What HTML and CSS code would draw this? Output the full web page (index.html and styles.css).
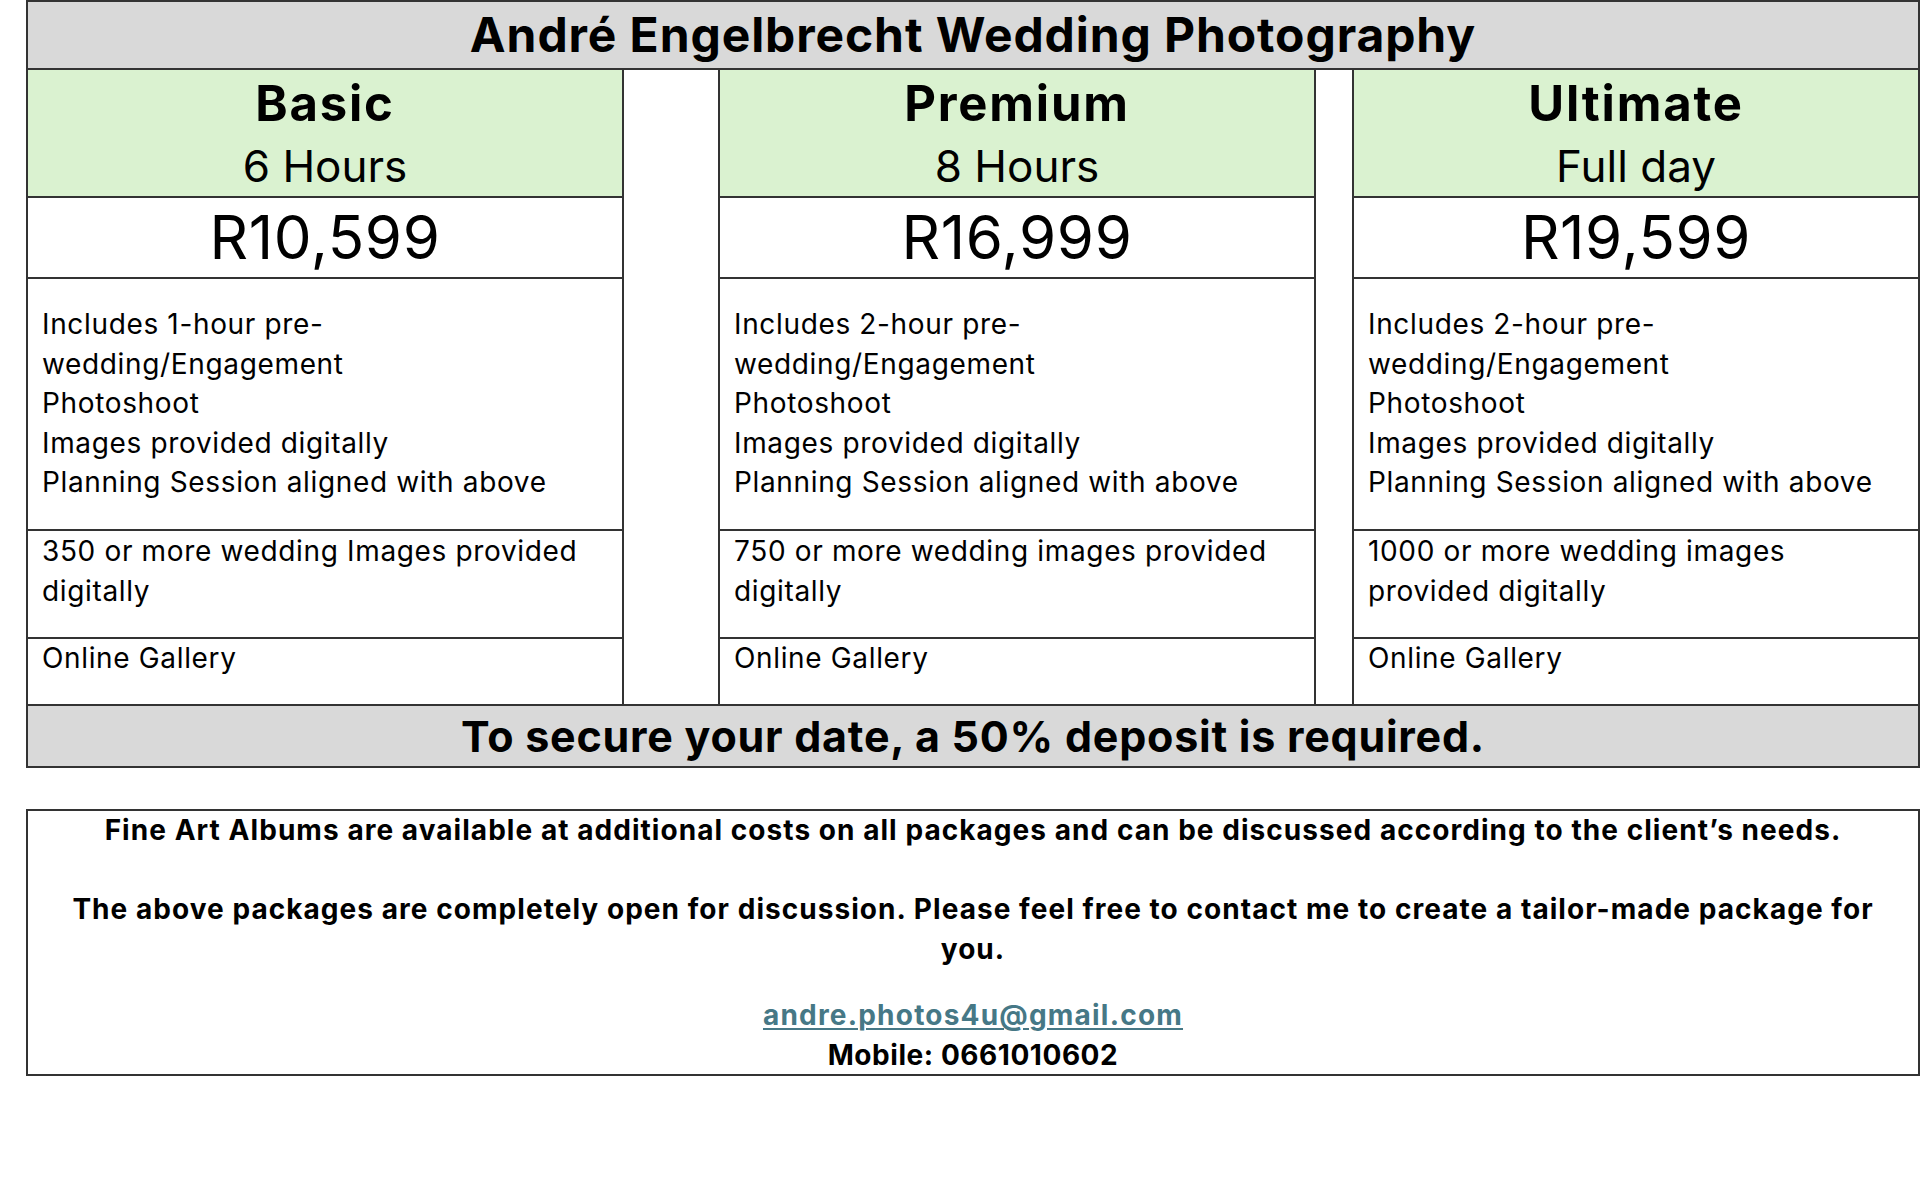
FILE: index.html
```html
<!DOCTYPE html>
<html lang="en">
<head>
<meta charset="utf-8">
<title>André Engelbrecht Wedding Photography</title>
<link rel="stylesheet" href="styles.css">
</head>
<body>
<div class="page">
  <table class="pricing">
    <colgroup>
      <col class="c-pkg"><col class="c-gap1"><col class="c-pkg"><col class="c-gap2"><col class="c-last">
    </colgroup>
    <tr class="r-title"><th colspan="5" class="title">André Engelbrecht Wedding Photography</th></tr>
    <tr class="r-head">
      <td class="head"><div class="name">Basic</div><div class="dur">6 Hours</div></td>
      <td class="gap" rowspan="5"></td>
      <td class="head"><div class="name">Premium</div><div class="dur">8 Hours</div></td>
      <td class="gap" rowspan="5"></td>
      <td class="head"><div class="name">Ultimate</div><div class="dur">Full day</div></td>
    </tr>
    <tr class="r-price">
      <td class="price">R10,599</td>
      <td class="price">R16,999</td>
      <td class="price">R19,599</td>
    </tr>
    <tr class="r-feat">
      <td class="feat">Includes 1-hour pre-<br>wedding/Engagement<br>Photoshoot<br>Images provided digitally<br>Planning Session aligned with above</td>
      <td class="feat">Includes 2-hour pre-<br>wedding/Engagement<br>Photoshoot<br>Images provided digitally<br>Planning Session aligned with above</td>
      <td class="feat">Includes 2-hour pre-<br>wedding/Engagement<br>Photoshoot<br>Images provided digitally<br>Planning Session aligned with above</td>
    </tr>
    <tr class="r-img">
      <td class="imgs">350 or more wedding Images provided<br>digitally</td>
      <td class="imgs">750 or more wedding images provided<br>digitally</td>
      <td class="imgs">1000 or more wedding images<br>provided digitally</td>
    </tr>
    <tr class="r-gal">
      <td class="gal">Online Gallery</td>
      <td class="gal">Online Gallery</td>
      <td class="gal">Online Gallery</td>
    </tr>
    <tr class="r-dep"><td colspan="5" class="deposit">To secure your date, a 50% deposit is required.</td></tr>
  </table>

  <div class="notes">
    <p class="note">Fine Art Albums are available at additional costs on all packages and can be discussed according to the client’s needs.</p>
    <p class="note gap-line">The above packages are completely open for discussion. Please feel free to contact me to create a tailor-made package for<br>you.</p>
    <p class="contact email"><a href="mailto:andre.photos4u@gmail.com">andre.photos4u@gmail.com</a></p>
    <p class="contact mobile">Mobile: 0661010602</p>
  </div>
</div>
</body>
</html>
```

FILE: styles.css
```css
* { box-sizing: border-box; }

body {
  margin: 0;
  background: #ffffff;
  color: #000000;
  font-family: Inter, "Open Sans", "Liberation Sans", sans-serif;
}

.page {
  padding: 0 0 0 26px;
}

.pricing {
  border-collapse: collapse;
  table-layout: fixed;
  width: 1894px;
}

.c-pkg { width: 596px; }
.c-gap1 { width: 96px; }
.c-gap2 { width: 38px; }

.pricing td,
.pricing th {
  border: 2px solid #333333;
  padding: 0;
  vertical-align: top;
}

.r-title { height: 68px; }
.r-head { height: 128px; }
.r-price { height: 81px; }
.r-feat { height: 252px; }
.r-img { height: 108px; }
.r-gal { height: 67px; }
.r-dep { height: 61px; }

.title {
  background: #d9d9d9;
  font-size: 48px;
  font-weight: 700;
  letter-spacing: 0.9px;
  line-height: 66px;
  text-align: center;
  vertical-align: middle;
}

.head {
  background: #daf2d0;
  text-align: center;
  padding-top: 6px !important;
}

.name {
  font-size: 49px;
  font-weight: 700;
  letter-spacing: 1.8px;
  line-height: 56px;
}

.dur {
  font-size: 44px;
  font-weight: 400;
  line-height: 56px;
  margin-top: 6px;
}

.gap {
  background: #ffffff;
}

.price {
  font-size: 60px;
  font-weight: 400;
  letter-spacing: 0.6px;
  line-height: 79px;
  text-align: center;
}

.feat,
.imgs,
.gal {
  font-size: 28px;
  letter-spacing: 0.65px;
  line-height: 39.6px;
  padding-left: 14px !important;
  padding-right: 4px !important;
}

.feat { padding-top: 26px !important; }
.imgs { padding-top: 1px !important; }
.gal { padding-top: 0 !important; }

.deposit {
  background: #d9d9d9;
  font-size: 43px;
  font-weight: 700;
  letter-spacing: 0.75px;
  line-height: 60px;
  text-align: center;
}

.notes {
  width: 1894px;
  margin-top: 41px;
  border: 2px solid #333333;
  padding: 0;
  text-align: center;
  font-weight: 700;
}

.note {
  margin: 0;
  font-size: 28px;
  letter-spacing: 1.05px;
  line-height: 39.6px;
}

.gap-line {
  margin-top: 39.6px;
}

.contact {
  margin: 0;
  font-size: 28px;
  line-height: 38px;
}

.email {
  margin-top: 27px;
  letter-spacing: 1.2px;
}

.mobile {
  letter-spacing: 0.55px;
  margin-top: 2px;
}

.email a {
  color: #467886;
  text-decoration: underline;
  text-underline-offset: 3px;
  text-decoration-thickness: 2px;
}
```
